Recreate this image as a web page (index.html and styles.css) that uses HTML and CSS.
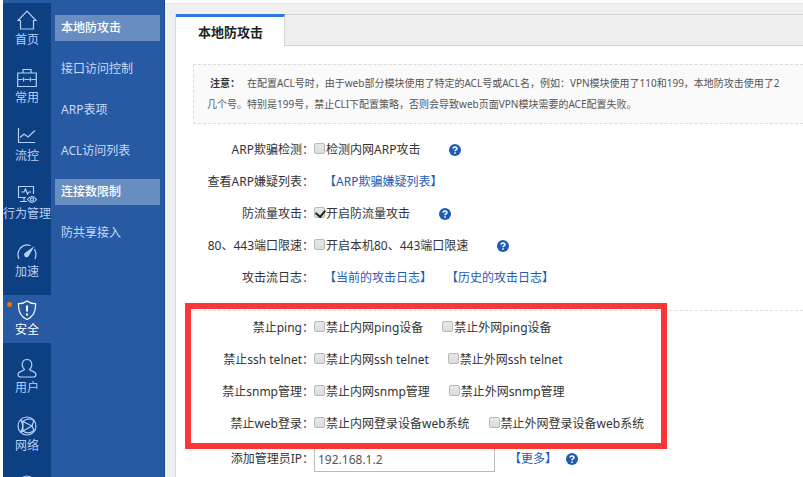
FILE: index.html
```html
<!DOCTYPE html>
<html lang="zh-CN">
<head>
    <meta charset="UTF-8">
    <meta name="viewport" content="width=device-width, initial-scale=1.0">
    <title>本地防攻击</title>
    <link rel="stylesheet" href="styles.css">
</head>
<body>
    <div class="layout">
        <nav class="main-nav">
            <a href="#" class="nav-item">
                <svg class="nav-icon" viewBox="0 0 20 20"><path d="M1 10.500 10 1l9 9.500h-2.500V19h-13v-8.500z"/></svg>
                首页
            </a>
            <a href="#" class="nav-item">
                <svg class="nav-icon" viewBox="0 0 20 20"><path d="M.7 5h18.600v13.500H.7zM6 5V1.500h8V5M.7 11.500h5M7.500 11.500h5M14.300 11.500h5M6.600 9.500v4M13.400 9.500v4"/></svg>
                常用
            </a>
            <a href="#" class="nav-item">
                <svg class="nav-icon" viewBox="0 0 20 20"><path d="M1.500 2v14.500H18M3 11.500l4-3.500 4 3 7-6.500"/></svg>
                流控
            </a>
            <a href="#" class="nav-item">
                <svg class="nav-icon" viewBox="0 0 20 20"><path d="M9 13.500H1.500v-11h15V10M4.500 8H7l1.500-3 2 5 1.500-2h2M3 17.500h7M7 14v3"/><path d="M10.500 15.500q4.500-6 9 0-4.500 6-9 0z"/><circle cx="15" cy="15.500" r="1.500"/></svg>
                行为管理
            </a>
            <a href="#" class="nav-item">
                <svg class="nav-icon" viewBox="0 0 20 20"><path d="M2 17Q-.5 11 3 6.500 7.500 1.500 13.500 3.500M17.500 7Q20 12 18 17"/><path class="solid" d="M17.500 4 12 13.500a2.500 2.500 0 1 1-3.500-3z"/></svg>
                加速
            </a>
            <a href="#" class="nav-item active">
                <span class="dot"></span>
                <svg class="nav-icon" viewBox="0 0 20 20"><path d="M10 1Q6 4 1.500 3.500C1 11 3 16.500 10 19.500 17 16.500 19 11 18.500 3.500 14 4 10 1 10 1z"/><path class="thick" d="M10 5.500v6M10 13.500v2"/></svg>
                安全
            </a>
            <a href="#" class="nav-item">
                <svg class="nav-icon" viewBox="0 0 20 20"><path d="M7.500 11.500C3.500 8 5 1.500 10 1.500s6.500 6.500 2.500 10c0 1.500 6.500 1.500 6.500 5 0 1.500-1 2.500-2.500 2.500h-13C2 19 1 18 1 16.500c0-3.500 6.500-3.500 6.500-5z"/></svg>
                用户
            </a>
            <a href="#" class="nav-item">
                <svg class="nav-icon" viewBox="0 0 20 20"><circle cx="10" cy="10" r="9"/><path d="M6 5.500 15 10l-9 5zM6 5.500Q11 1 17 4.500M6 5.500 3.500 4M6 15l-2.500 1.500M6 15q5 4 11-.5M15 10l2-5.500M15 10l2 4.500M3.500 4Q8 10 3.500 16.500"/></svg>
                网络
            </a>
            <a href="#" class="nav-item">
                <svg class="nav-icon" viewBox="0 0 20 20"><circle cx="10" cy="10" r="8"/></svg>
            </a>
        </nav>

        <nav class="sub-nav">
            <a href="#" class="sub-item active">本地防攻击</a>
            <a href="#" class="sub-item">接口访问控制</a>
            <a href="#" class="sub-item">ARP表项</a>
            <a href="#" class="sub-item">ACL访问列表</a>
            <a href="#" class="sub-item active">连接数限制</a>
            <a href="#" class="sub-item">防共享接入</a>
        </nav>

        <main class="content">
            <div class="panel">
                <div class="tabs">
                    <a href="#" class="tab">本地防攻击</a>
                </div>

                <div class="panel-body">
                    <div class="notice">
                        <p><strong>注意：</strong>在配置ACL号时，由于web部分模块使用了特定的ACL号或ACL名，例如：VPN模块使用了110和199，本地防攻击使用了2</p>
                        <p>几个号。特别是199号，禁止CLI下配置策略，否则会导致web页面VPN模块需要的ACE配置失败。</p>
                    </div>

                    <form>
                        <div class="form-section">
                            <div class="form-row">
                                <span class="row-label">ARP欺骗检测：</span>
                                <label class="check"><input type="checkbox">检测内网ARP攻击</label>
                                <button type="button" class="help" aria-label="帮助"><svg viewBox="0 0 12 12"><circle cx="6" cy="6" r="6"/><path d="M4 4.600Q4.100 2.900 6 2.900T8 4.500Q8 5.300 6.900 5.900 6 6.400 6 7.300M6 8.300v1.500"/></svg></button>
                            </div>
                            <div class="form-row">
                                <span class="row-label">查看ARP嫌疑列表：</span>
                                <a href="#" class="row-link">【ARP欺骗嫌疑列表】</a>
                            </div>
                            <div class="form-row">
                                <span class="row-label">防流量攻击：</span>
                                <label class="check"><input type="checkbox" checked>开启防流量攻击</label>
                                <button type="button" class="help" aria-label="帮助"><svg viewBox="0 0 12 12"><circle cx="6" cy="6" r="6"/><path d="M4 4.600Q4.100 2.900 6 2.900T8 4.500Q8 5.300 6.900 5.900 6 6.400 6 7.300M6 8.300v1.500"/></svg></button>
                            </div>
                            <div class="form-row">
                                <span class="row-label">80、443端口限速：</span>
                                <label class="check"><input type="checkbox">开启本机80、443端口限速</label>
                                <button type="button" class="help" aria-label="帮助"><svg viewBox="0 0 12 12"><circle cx="6" cy="6" r="6"/><path d="M4 4.600Q4.100 2.900 6 2.900T8 4.500Q8 5.300 6.900 5.900 6 6.400 6 7.300M6 8.300v1.500"/></svg></button>
                            </div>
                            <div class="form-row">
                                <span class="row-label">攻击流日志：</span>
                                <a href="#" class="row-link">【当前的攻击日志】</a>
                                <a href="#" class="row-link">【历史的攻击日志】</a>
                            </div>
                        </div>

                        <div class="form-section divided">
                            <div class="highlight"></div>
                            <div class="form-row">
                                <span class="row-label">禁止ping：</span>
                                <label class="check"><input type="checkbox">禁止内网ping设备</label>
                                <label class="check"><input type="checkbox">禁止外网ping设备</label>
                            </div>
                            <div class="form-row">
                                <span class="row-label">禁止ssh telnet：</span>
                                <label class="check"><input type="checkbox">禁止内网ssh telnet</label>
                                <label class="check"><input type="checkbox">禁止外网ssh telnet</label>
                            </div>
                            <div class="form-row">
                                <span class="row-label">禁止snmp管理：</span>
                                <label class="check"><input type="checkbox">禁止内网snmp管理</label>
                                <label class="check"><input type="checkbox">禁止外网snmp管理</label>
                            </div>
                            <div class="form-row">
                                <span class="row-label">禁止web登录：</span>
                                <label class="check"><input type="checkbox">禁止内网登录设备web系统</label>
                                <label class="check"><input type="checkbox">禁止外网登录设备web系统</label>
                            </div>
                            <div class="form-row ip-row">
                                <label class="row-label" for="admin_ip">添加管理员IP：</label>
                                <input type="text" class="text-input" id="admin_ip" value="192.168.1.2">
                                <a href="#" class="row-link">【更多】</a>
                                <button type="button" class="help" aria-label="帮助"><svg viewBox="0 0 12 12"><circle cx="6" cy="6" r="6"/><path d="M4 4.600Q4.100 2.900 6 2.900T8 4.500Q8 5.300 6.900 5.900 6 6.400 6 7.300M6 8.300v1.500"/></svg></button>
                            </div>
                        </div>
                    </form>
                </div>
            </div>
        </main>
    </div>
</body>
</html>
```
FILE: styles.css
```css
* {
    margin: 0;
    padding: 0;
    box-sizing: border-box;
}

body {
    font-family: "Noto Sans", "Noto Sans CJK SC", sans-serif;
    font-size: 12px;
    line-height: 16px;
    color: #333;
    background: #fff;
}

a {
    text-decoration: none;
}

.layout {
    display: flex;
    height: 100vh;
    padding-left: 3px;
    overflow: hidden;
}

/* Left navigation */
.main-nav {
    flex: none;
    width: 48px;
    display: flex;
    flex-direction: column;
    gap: 10px;
    padding-top: 2px;
    background: #0d3f83;
    border-top: 3px solid #275aa2;
    overflow: hidden;
}

.nav-item {
    position: relative;
    flex: none;
    height: 48px;
    display: flex;
    flex-direction: column;
    align-items: center;
    gap: 2px;
    padding-top: 5px;
    color: #b5d0f7;
    white-space: nowrap;
}

.nav-item.active {
    background: #275aa2;
    color: #fff;
}

.nav-icon {
    flex: none;
    width: 20px;
    height: 20px;
    fill: none;
    stroke: currentColor;
    stroke-width: 1.2;
}

.nav-icon .solid {
    fill: currentColor;
    stroke: none;
}

.nav-icon .thick {
    stroke-width: 2;
}

.dot {
    position: absolute;
    left: 4px;
    top: 7px;
    width: 5px;
    height: 5px;
    border-radius: 50%;
    background: #ff6a00;
}

.sub-nav {
    flex: none;
    width: 114px;
    display: flex;
    flex-direction: column;
    gap: 15px;
    padding: 15px 4px 0;
    background: #275aa2;
    border-right: 1px solid #174a91;
}

.sub-item {
    padding: 5px 6px;
    color: #c5dbfa;
}

.sub-item.active {
    background: #688dc0;
    color: #fff;
    font-weight: 500;
}

/* Content */
.content {
    flex: 1;
    min-width: 0;
    margin-top: 3px;
    padding: 10px 0 0 10px;
    background: #f0f0f0;
    border-top: 1px solid #e6e6e6;
    overflow: hidden;
}

.panel {
    min-height: 100%;
    background: #fff;
    border-left: 1px solid #d8d8d8;
}

.tabs {
    display: flex;
    height: 32px;
    background: #eee;
    border-top: 1px solid #d5d5d5;
    border-bottom: 1px solid #d5d5d5;
}

.tab {
    height: 32px;
    margin-top: -1px;
    padding: 7px 21px 0 22px;
    background: #fff;
    border-top: 3px solid #2f7be0;
    border-right: 1px solid #d5d5d5;
    color: #222;
    font-size: 13px;
    font-weight: 600;
}

.panel-body {
    padding: 18px 0 0 17px;
}

.notice {
    padding: 8px 13px;
    background: #fafafa;
    border: 1px dashed #ddd;
    border-right: none;
    color: #555;
    font-size: 10px;
    line-height: 21px;
    white-space: nowrap;
    overflow: hidden;
}

.notice strong {
    margin: 0 7px 0 3px;
    color: #333;
    font-weight: 600;
}

.form-section {
    padding: 10px 0 16px;
}

.form-section.divided {
    position: relative;
    padding: 1px 0 0;
    border-top: 1px dashed #ddd;
}

.form-row {
    display: flex;
    align-items: center;
    height: 32px;
    white-space: nowrap;
}

.row-label {
    flex: none;
    width: 121px;
    text-align: right;
}

.check {
    display: flex;
    align-items: center;
}

.check + .check {
    margin-left: 19px;
}

.check input {
    appearance: none;
    position: relative;
    width: 11px;
    height: 11px;
    margin-right: 1px;
    margin-bottom: 3px;
    border: 1px solid #b8b8b8;
    border-radius: 2px;
    background: linear-gradient(#e8e8e8, #dcdcdc);
}

.check input:checked::after {
    content: "";
    position: absolute;
    left: 2px;
    top: 0;
    width: 5px;
    height: 7px;
    border: solid #222;
    border-width: 0 2px 2px 0;
    transform: rotate(40deg);
}

.row-link {
    margin-left: 10px;
    color: #1f5bb5;
}

.row-link + .row-link {
    margin-left: 14px;
}

.help {
    width: 12px;
    height: 12px;
    margin-left: 29px;
    border: none;
    background: none;
    cursor: pointer;
}

.help svg {
    display: block;
    fill: #1f5bb5;
}

.help path {
    fill: none;
    stroke: #fff;
    stroke-width: 1.5;
}

.ip-row {
    height: 38px;
}

.text-input {
    width: 181px;
    height: 26px;
    padding: 0 3px;
    border: 1px solid #bbb;
    background: #fff;
    color: #555;
    font: inherit;
}

.text-input + .row-link {
    margin-left: 14px;
}

.row-link + .help {
    margin-left: 9px;
}

/* Red frame over the access restriction rows */
.highlight {
    position: absolute;
    left: -8px;
    top: -8px;
    width: 482px;
    height: 146px;
    border: 6px solid #fc3636;
    pointer-events: none;
}
```
